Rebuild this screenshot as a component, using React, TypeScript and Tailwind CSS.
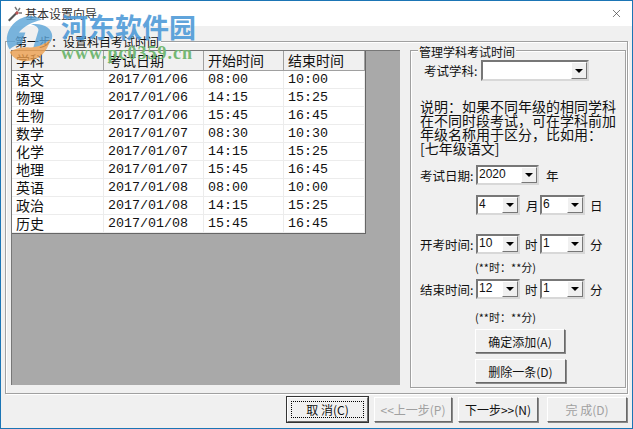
import React from 'react'
import { X } from 'lucide-react'

const rows = [
  ['语文', '2017/01/06', '08:00', '10:00'],
  ['物理', '2017/01/06', '14:15', '15:25'],
  ['生物', '2017/01/06', '15:45', '16:45'],
  ['数学', '2017/01/07', '08:30', '10:30'],
  ['化学', '2017/01/07', '14:15', '15:25'],
  ['地理', '2017/01/07', '15:45', '16:45'],
  ['英语', '2017/01/08', '08:00', '10:00'],
  ['政治', '2017/01/08', '14:15', '15:25'],
  ['历史', '2017/01/08', '15:45', '16:45'],
]

const raised = 'border border-t-white border-l-white border-r-[#696969] border-b-[#696969] shadow-[1px_1px_0_#8a8a8a]'

function Combo({ value, width, height = 'h-[20px]' }: { value?: string; width: string; height?: string }) {
  return (
    <div className={`${width} ${height} shrink-0 flex items-stretch bg-white border-2 border-t-[#777] border-l-[#777] border-r-[#d8d8d8] border-b-[#d8d8d8]`}>
      <span className="flex-1 pl-px text-[12px] leading-[15px] text-[#111] overflow-hidden font-['Liberation_Sans',sans-serif]">{value}</span>
      <span className="w-[16px] bg-[#f0f0f0] border border-t-white border-l-white border-r-[#777] border-b-[#777] flex items-center justify-center">
        <span className="w-0 h-0 border-x-[4px] border-x-transparent border-t-[4px] border-t-black" />
      </span>
    </div>
  )
}

function Btn({ label, width, height, disabled, focus }: { label: string; width: string; height: string; disabled?: boolean; focus?: boolean }) {
  return (
    <div className={`${width} ${height} shrink-0 bg-[#f0f0f0] ${raised} flex items-center justify-center text-[12px] whitespace-nowrap ${disabled ? 'text-[#a0a0a0]' : 'text-[#111]'} ${focus ? 'outline outline-1 outline-[#333]' : ''}`}>
      <span className={focus ? 'w-[calc(100%-6px)] h-[calc(100%-6px)] border border-dotted border-black flex items-center justify-center' : ''}>{label}</span>
    </div>
  )
}

export default function App() {
  return (
    <div className="relative w-[633px] h-[429px] overflow-hidden flex flex-col bg-[#f0f0f0] border border-[#1b75b5] text-[14px] text-[#111] [font-family:'Noto_Sans_CJK_SC','Liberation_Sans',sans-serif]">
      {/* title bar */}
      <div className="h-[25px] shrink-0 bg-white flex items-center pl-[6px] pr-[9px]">
        <svg width="16" height="16" viewBox="0 0 16 16" className="shrink-0">
          <path d="M1 14l9-9 1.5 1.5-9 9z" fill="#555" />
          <path d="M8 1l2 3M13 2l-2 3M15 7l-3 0" stroke="#777" strokeWidth="1.4" fill="none" />
          <path d="M10 5l2 2-2 2-2-2z" fill="#b55" />
        </svg>
        <span className="ml-[2px] text-[12px] text-[#333]">基本设置向导</span>
        <X className="ml-auto text-[#333]" size={13} strokeWidth={1.2} />
      </div>

      {/* step box */}
      <div className="relative mt-[15px] mx-[4px] h-[353px] shrink-0 border border-[#a0a0a0] shadow-[inset_1px_1px_0_#fff,1px_1px_0_#fff] pt-[8px] pl-[5px] flex items-start">
        <span className="absolute -top-[8px] left-[9px] bg-[#f0f0f0] pr-[2px] text-[12px] leading-[15px]">第一步：设置科目考试时间</span>

        {/* table panel */}
        <div className="w-[389px] h-[335px] shrink-0 bg-[#a9a9a9] border-l border-t border-[#777]">
          <table className="w-[354px] table-fixed bg-white border-separate border-spacing-0 border-r border-b border-[#666] text-[14px] leading-[17px]">
            <colgroup>
              <col className="w-[92px]" />
              <col className="w-[100px]" />
              <col className="w-[80px]" />
              <col className="w-[81px]" />
            </colgroup>
            <thead>
              <tr className="h-[20px] bg-[#f0f0f0]">
                {['学科', '考试日期', '开始时间', '结束时间'].map((h) => (
                  <th key={h} className="h-[20px] p-0 pl-[4px] font-normal text-left border-r border-b border-[#a0a0a0]">{h}</th>
                ))}
              </tr>
            </thead>
            <tbody>
              {rows.map((r) => (
                <tr key={r[0]}>
                  <td className="h-[18px] p-0 pl-[4px] border-r border-b border-[#ececec]">{r[0]}</td>
                  {r.slice(1).map((c, i) => (
                    <td key={i} className="h-[18px] p-0 pl-[4px] border-r border-b border-[#ececec] text-[13.33px] font-['Liberation_Mono',monospace]">{c}</td>
                  ))}
                </tr>
              ))}
            </tbody>
          </table>
        </div>

        {/* right group */}
        <div className="relative ml-[10px] w-[216px] h-[338px] shrink-0 border border-[#a0a0a0] shadow-[inset_1px_1px_0_#fff,1px_1px_0_#fff] pt-[9px] pl-[9px] text-[12.5px] leading-[17px]">
          <span className="absolute -top-[7px] left-[7px] bg-[#f0f0f0] px-[1px] text-[12px] leading-[15px]">管理学科考试时间</span>
          <div className="flex items-center pl-[4px]">
            <span className="w-[57px] whitespace-nowrap">考试学科:</span>
            <Combo width="w-[108px]" height="h-[21px]" />
          </div>
          <p className="mt-[18px] text-[14px] leading-[14px] w-[200px]">说明：如果不同年级的相同学科在不同时段考试，可在学科前加年级名称用于区分，比如用：[七年级语文]</p>
          <div className="mt-[10px] flex items-center">
            <span className="w-[56px] whitespace-nowrap">考试日期:</span>
            <Combo width="w-[63px]" value="2020" />
            <span className="ml-[7px]">年</span>
          </div>
          <div className="mt-[10px] flex items-center pl-[56px]">
            <Combo width="w-[44px]" value="4" />
            <span className="ml-[6px] w-[14px]">月</span>
            <Combo width="w-[45px]" value="6" />
            <span className="ml-[5px]">日</span>
          </div>
          <div className="mt-[19px] flex items-center">
            <span className="w-[56px] whitespace-nowrap">开考时间:</span>
            <Combo width="w-[44px]" value="10" />
            <span className="ml-[5px] w-[15px]">时</span>
            <Combo width="w-[45px]" value="1" />
            <span className="ml-[5px]">分</span>
          </div>
          <div className="ml-[55px] mt-[6px] text-[11px] leading-[15px]">(**时：**分)</div>
          <div className="mt-[4px] flex items-center">
            <span className="w-[56px] whitespace-nowrap">结束时间:</span>
            <Combo width="w-[44px]" value="12" />
            <span className="ml-[5px] w-[15px]">时</span>
            <Combo width="w-[45px]" value="1" />
            <span className="ml-[5px]">分</span>
          </div>
          <div className="ml-[55px] mt-[11px] text-[11px] leading-[15px]">(**时：**分)</div>
          <div className="ml-[55px] mt-[4px] flex flex-col gap-[6px]">
            <Btn label="确定添加(A)" width="w-[90px]" height="h-[24px]" />
            <Btn label="删除一条(D)" width="w-[91px]" height="h-[24px]" />
          </div>
        </div>
      </div>

      {/* footer buttons */}
      <div className="mt-[3px] shrink-0 flex justify-end items-start pr-[5px]">
        <Btn label="取 消(C)" width="w-[81px]" height="h-[25px]" focus />
        <div className="ml-[6px]"><Btn label="<<上一步(P)" width="w-[78px]" height="h-[25px]" disabled /></div>
        <div className="ml-[6px]"><Btn label="下一步>>(N)" width="w-[80px]" height="h-[25px]" /></div>
        <div className="ml-[9px]"><Btn label="完 成(D)" width="w-[80px]" height="h-[25px]" disabled /></div>
      </div>

      {/* site watermark */}
      <div className="absolute z-20 left-[4px] top-[9px] pointer-events-none flex">
        <svg width="50" height="50" viewBox="0 0 54 54" className="mt-[5px] opacity-80">
          <path d="M26 1C12 3 2 14 2 27c0 4 1 7 3 10 3-3 8-5 13-6l4-12h-7C20 12 30 7 40 5c-4-3-9-4-14-4z" fill="#5ba4d8" />
          <path d="M28 10c13-2 23 4 23 13 0 8-9 14-21 14l6-20c1-3-3-6-8-7z" fill="#5ba4d8" />
          <path d="M5 40c6-4 14-6 22-5 8 0 16-3 22-9-3 14-13 24-27 24-8 0-14-4-17-10z" fill="#eda04f" />
        </svg>
        <div className="ml-[6px]">
          <div className="text-[27px] leading-[33px] font-bold text-[#4f9bd8] opacity-90 whitespace-nowrap [font-family:'Noto_Sans_CJK_SC',sans-serif]">河东软件园</div>
          <div className="mt-[2px] text-[18px] leading-[16px] font-bold text-[#74b874] tracking-[1px] whitespace-nowrap font-['Liberation_Serif',serif]">www.pc0359.cn</div>
        </div>
      </div>
    </div>
  )
}
